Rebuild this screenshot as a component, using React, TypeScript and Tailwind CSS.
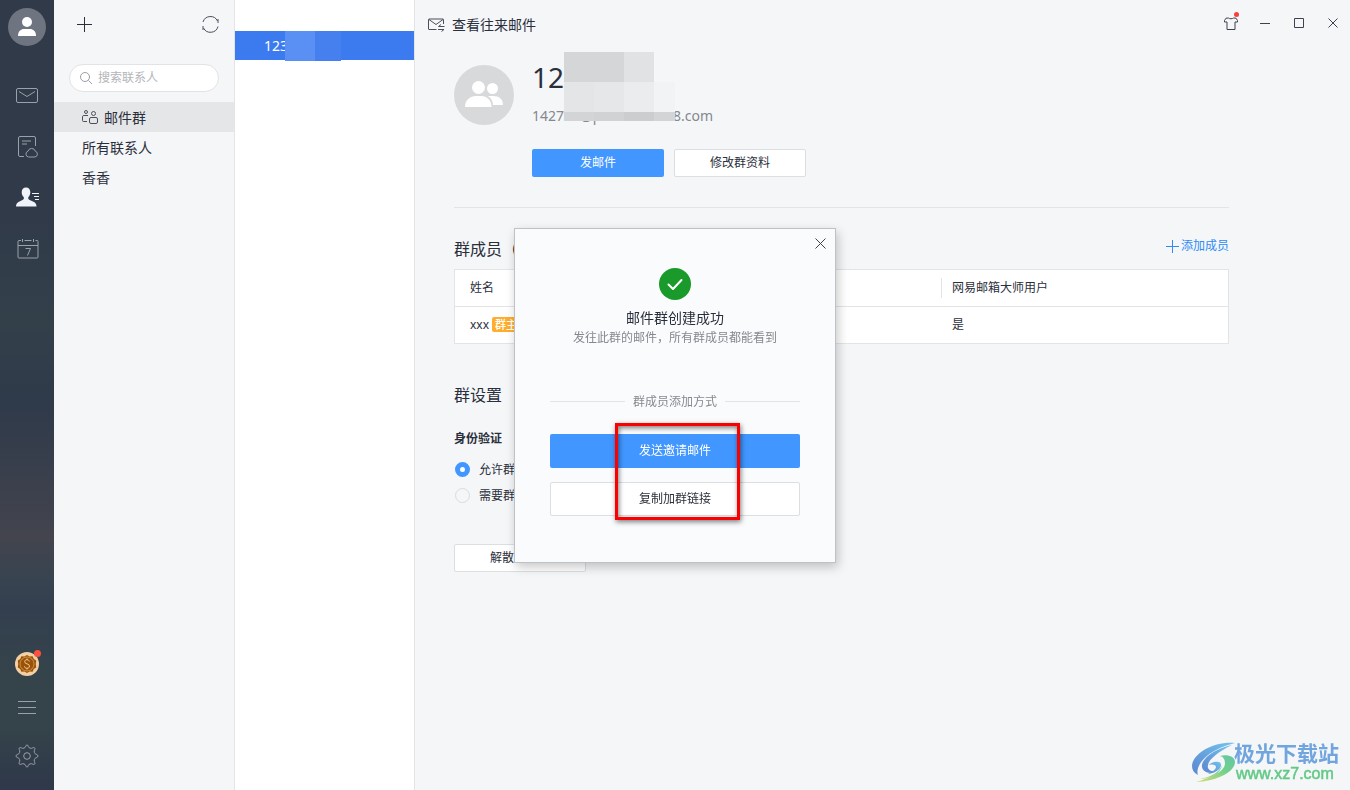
import { useState } from "react";
import { clsx } from "clsx";

const folders = ["所有联系人", "香香"];

function MailIcon() {
  return (
    <svg width="22" height="16" viewBox="0 0 22 16" fill="none" stroke="currentColor">
      <rect x="0.5" y="0.5" width="21" height="14" rx="1.5" />
      <path d="M3 3.5l8 5 8-5" />
    </svg>
  );
}

function NoteIcon() {
  return (
    <svg width="20" height="22" viewBox="0 0 20 22" fill="none" stroke="currentColor">
      <path d="M6 20.500H2A1.500 1.500 0 0 1 .500 19V2A1.500 1.500 0 0 1 2 .500H16A1.500 1.500 0 0 1 17.500 2V10M4 5h9M4 8h5" />
      <path d="M10.500 21a3 3 0 0 1-.5-5.800a3.800 3.800 0 0 1 7.300 0a3 3 0 0 1-.3 5.800z" />
    </svg>
  );
}

function ContactIcon() {
  return (
    <svg width="24" height="20" viewBox="0 0 24 20" fill="#f0f4fa" className="mb-0.5">
      <path d="M10 0.500c2.600 0 4.300 1.900 4.300 4.700 0 2-.8 3.800-1.900 4.900-.5 1.700.1 2.500 1.300 3l4.300 1.800c1.500.7 2.500 2.200 2.500 4.600H0c0-2.400 1-3.900 2.500-4.600L6.500 13.100c1.200-.5 1.700-1.300 1.200-3C6.500 9 5.700 7.200 5.700 5.200 5.700 2.400 7.400.500 10 .500z" />
      <path d="M16 6.500h7M18 9.500h5M19 12.500h4" stroke="#f0f4fa" />
    </svg>
  );
}

function CalendarIcon() {
  return (
    <svg width="22" height="20" viewBox="0 0 22 20" fill="none" stroke="currentColor">
      <path d="M4 1.500H2A1 1 0 0 0 1 2.500V18A1 1 0 0 0 2 19H20A1 1 0 0 0 21 18V2.500A1 1 0 0 0 20 1.500H18.500M7.500 1.500H14.500M1 6.500H21M5.500 0V3M16.500 0V3" />
      <path d="M8.500 9.500h5l-3 7" />
    </svg>
  );
}

function CoinIcon() {
  return (
    <svg width="24" height="24" viewBox="0 0 24 24" fill="none">
      <circle cx="12" cy="12" r="12" fill="#f3cfa4" />
      <path d="M12 3l2.600 1.500 3-.2 1.200 2.700 2.400 1.600-.4 3.400.4 3.400-2.400 1.600-1.200 2.700-3-.2L12 21l-2.600-1.500-3 .2-1.200-2.700-2.400-1.600.4-3.400-.4-3.400 2.400-1.600 1.200-2.700 3 .2z" fill="#9a5306" />
      <circle cx="12" cy="12" r="7" stroke="#d99f5c" strokeWidth="0.800" />
      <path d="M14.300 9.500c-.3-1.200-1.100-1.800-2.300-1.800s-2.300.7-2.300 2c0 2.900 4.800 1.500 4.800 4.400 0 1.400-1 2.200-2.500 2.200-1.400 0-2.300-.7-2.600-2M12 6.500v1.500M12 16v1.500" stroke="#f0c898" />
    </svg>
  );
}

function GearIcon() {
  return (
    <svg width="24" height="24" viewBox="0 0 24 24" fill="none" stroke="currentColor" strokeLinejoin="round">
      <path d="M10.200 3.400C10.800 2.800 10.700 1 12 1s1.200 1.800 1.800 2.400c.6.600 1.800 1 2.700.9.900-.1 2.200-1.300 3.100-.4s-.3 2.200-.4 3.100c-.1.900.3 2.100.9 2.700.6.600 2.900.8 2.900 2.300s-2.300 1.700-2.900 2.300c-.6.600-1 1.800-.9 2.700.1.900 1.300 2.200.4 3.100s-2.200-.3-3.100-.4c-.9-.1-2.100.3-2.700.9-.6.600-.5 2.400-1.800 2.400s-1.200-1.800-1.800-2.400c-.6-.6-1.800-1-2.700-.9-.9.100-2.200 1.300-3.100.4s.3-2.200.4-3.100c.1-.9-.3-2.100-.9-2.700C3.300 13.700 1 13.500 1 12s2.300-1.700 2.900-2.300c.6-.6 1-1.800.9-2.700-.1-.9-1.300-2.200-.4-3.100s2.200.3 3.100.4c.9.100 2.100-.3 2.700-.9z" />
      <circle cx="12" cy="12" r="3.300" />
    </svg>
  );
}

function SideBar() {
  return (
    <aside className="flex w-[54px] shrink-0 flex-col items-center bg-[linear-gradient(180deg,#303a49_0%,#303a49_27%,#33404a_41%,#2f3a4a_51%,#43444e_68%,#384450_73%,#333f4f_77%,#35444a_87%,#35434a_92%,#2f394a_99%)] pt-2 pb-2 text-[#9aa1aa]">
      <button aria-label="账号" className="size-[38px] rounded-full bg-[#6e7480]">
        <svg width="38" height="38" viewBox="0 0 38 38" fill="#fff">
          <circle cx="19" cy="14" r="5" />
          <path d="M10 28c0-5 3-7 6-7h6c3 0 6 2 6 7z" />
        </svg>
      </button>
      <nav className="mt-6 flex flex-col">
        <button aria-label="邮件" className="flex h-[51px] w-[54px] items-center justify-center"><MailIcon /></button>
        <button aria-label="便签" className="flex h-[51px] w-[54px] items-center justify-center pl-0.5"><NoteIcon /></button>
        <button aria-label="联系人" className="flex h-[51px] w-[54px] items-center justify-center pl-0.5"><ContactIcon /></button>
        <button aria-label="日历" className="flex h-[51px] w-[54px] items-center justify-center pl-0.5"><CalendarIcon /></button>
      </nav>
      <div className="mt-auto flex flex-col">
        <button aria-label="金币" className="flex h-11 w-[54px] items-center justify-center">
          <span className="relative">
            <CoinIcon />
            <span className="absolute -top-0.5 -right-0.5 size-[7px] rounded-full bg-[#ff4f3e]" />
          </span>
        </button>
        <button aria-label="菜单" className="flex h-11 w-[54px] items-center justify-center">
          <svg width="18" height="14" viewBox="0 0 18 14" stroke="currentColor">
            <path d="M0 0.500h18M0 6.500h18M0 12.500h18" />
          </svg>
        </button>
        <button aria-label="设置" className="flex h-[52px] w-[54px] items-center justify-center"><GearIcon /></button>
      </div>
    </aside>
  );
}

function ContactFolders() {
  return (
    <section className="w-[181px] shrink-0 border-r border-[#e2e4e6] bg-[#f4f6f8]">
      <div className="flex h-[49px] items-center justify-between pr-[15px] pl-[23px] text-[#2b2f3b]">
        <button aria-label="新建">
          <svg width="15" height="15" viewBox="0 0 15 15" stroke="currentColor">
            <path d="M0 7.500h15M7.500 0v15" />
          </svg>
        </button>
        <button aria-label="刷新">
          <svg width="17" height="17" viewBox="0 0 17 17" fill="none" stroke="#4a4f59">
            <path d="M1 6A7.800 7.800 0 0 1 15.500 5M16 3v4M16 10.500A7.800 7.800 0 0 1 1.500 12M1 10v4" />
          </svg>
        </button>
      </div>
      <label className="mt-[15px] mr-[15px] ml-[15px] flex h-7 items-center gap-1.5 rounded-full border border-[#e1e3e6] bg-white pl-2.5">
        <svg width="12" height="12" viewBox="0 0 12 12" fill="none" stroke="#9a9ea6" className="shrink-0">
          <circle cx="5" cy="5" r="4.500" />
          <path d="M8.500 8.500L12 12" />
        </svg>
        <input placeholder="搜索联系人" aria-label="搜索联系人" className="w-full min-w-0 bg-transparent text-xs outline-none placeholder:text-[#b3b5b9]" />
      </label>
      <ul className="mt-2.5 text-sm leading-8">
        <li className="flex h-[30px] gap-1.5 bg-[#e5e6e8] pl-7">
          <svg width="16" height="14" viewBox="0 0 16 14" fill="none" stroke="#4a4f59" className="self-center">
            <circle cx="4" cy="2" r="1.500" />
            <circle cx="11.500" cy="3.500" r="2" />
            <path d="M6 5.500H1.800C1 5.500.5 6 .5 6.800V10.500C.5 11.300 1 11.500 1.800 11.500H5" />
            <rect x="7.500" y="7.500" width="8" height="6" rx="1.500" />
          </svg>
          邮件群
        </li>
        {folders.map((name) => (
          <li key={name} className="h-[30px] pl-7">{name}</li>
        ))}
      </ul>
    </section>
  );
}

function GroupList() {
  return (
    <section className="w-[180px] shrink-0 border-r border-[#e2e4e6] bg-white pt-[31px]">
      <div className="relative h-[29px] bg-[#3c7af0] pl-[29px] text-sm leading-[29px] text-white">
        1234
        <span className="absolute top-0 left-[50px] flex h-[30px]">
          <i className="w-[30px] bg-[#5a90f3]" />
          <i className="w-[26px] bg-[#4680ee]" />
        </span>
      </div>
    </section>
  );
}

function WindowBar() {
  return (
    <header className="flex h-[50px] items-center justify-between pr-3 pl-[13px]">
      <div className="flex items-center gap-[7px] text-sm">
        <svg width="17" height="14" viewBox="0 0 17 14" fill="none" stroke="#4a4f59">
          <path d="M8.500 11.500H1A.5.500 0 0 1 .5 11V1.500A.5.500 0 0 1 1 1H15A.5.500 0 0 1 15.500 1.500V6M1 1.500l7 5 7-5" />
          <path d="M16.500 8.500H10.500L13 6.500M10 11.500h6l-2.500 2" />
        </svg>
        查看往来邮件
      </div>
      <div className="flex items-center gap-6 pb-1 text-[#3d424c]">
        <button aria-label="换肤" className="relative -mr-0.5">
          <svg width="14" height="13" viewBox="0 0 14 13" fill="none" stroke="currentColor">
            <path d="M4.500 1C5.500 2 8.500 2 9.500 1L12 1.200 13.500 3.500V5H11V12.500H3V5H.5V3.500L2 1.200z" />
          </svg>
          <span className="absolute -top-[5px] -right-px size-[5px] rounded-full bg-[#fa3e3e]" />
        </button>
        <button aria-label="最小化">
          <svg width="10" height="11" viewBox="0 0 10 11" stroke="currentColor"><path d="M0 5.500h10" /></svg>
        </button>
        <button aria-label="最大化">
          <svg width="10" height="10" viewBox="0 0 10 10" fill="none" stroke="currentColor"><path d="M.5.500h9v9h-9z" /></svg>
        </button>
        <button aria-label="关闭">
          <svg width="10" height="10" viewBox="0 0 10 10" stroke="currentColor"><path d="M.5.500l9 9M9.500.500l-9 9" /></svg>
        </button>
      </div>
    </header>
  );
}

function GroupProfile() {
  return (
    <div className="flex gap-[18px] border-b border-[#e2e4e6] pt-[15px] pb-[30px]">
      <svg width="60" height="60" viewBox="0 0 60 60" fill="#fff" className="shrink-0">
        <circle cx="30" cy="30" r="30" fill="#d8d9db" />
        <circle cx="38.500" cy="23.500" r="5.500" />
        <path d="M34 31h5c6 0 10 3 10 9H39c0-4-2-7-5-9z" />
        <circle cx="24.500" cy="22.500" r="6.500" />
        <path d="M11 42c0-7 5-11 11-11h5c6 0 10.500 4 10.500 11z" />
      </svg>
      <div>
        <div className="relative">
          <h1 className="text-[28px] leading-6">1234</h1>
          <p className="mt-[18px] flex text-sm leading-[18px] text-[#85888e]">
            <span className="w-[141px]">142763@p</span>
            <span>8.com</span>
          </p>
          <div className="absolute -top-[13px] left-8 flex h-[69px] w-[111px] flex-col">
            <div className="flex h-[30px]">
              <i className="w-[60px] bg-[#d5d6d8]" />
              <i className="w-[30px] bg-[#e1e2e4]" />
            </div>
            <div className="flex h-[30px]">
              <i className="w-[30px] bg-[#e4e5e7]" />
              <i className="w-[30px] bg-[#e6e7e9]" />
              <i className="w-[30px] bg-[#ebecee]" />
              <i className="w-[21px] bg-[#f2f3f5]" />
            </div>
            <div className="flex h-[9px]">
              <i className="w-[30px] bg-[#d3d4d6]" />
              <i className="w-[30px] bg-[#d1d2d4]" />
              <i className="w-[30px] bg-[#cccdcf]" />
              <i className="w-[21px] bg-[#d3d4d6]" />
            </div>
          </div>
        </div>
        <div className="mt-6 flex gap-2.5 text-xs">
          <button className="h-7 w-[132px] rounded-xs bg-[#4196ff] text-white">发邮件</button>
          <button className="h-7 w-[132px] rounded-xs border border-[#dcdfe1] bg-white">修改群资料</button>
        </div>
      </div>
    </div>
  );
}

function Members() {
  return (
    <section className="mt-7">
      <div className="flex justify-between">
        <h2 className="text-base leading-[26px]">群成员（1）</h2>
        <a href="#add" className="flex h-5 items-center gap-0.5 text-xs leading-5 text-[#2e8bf5]">
          <svg width="13" height="13" viewBox="0 0 13 13" stroke="currentColor"><path d="M0 6.500h13M6.500 0v13" /></svg>
          添加成员
        </a>
      </div>
      <div className="mt-[7px] border border-[#e2e4e6] bg-white">
        <table className="w-full table-fixed text-left text-xs">
          <thead>
            <tr className="h-9 border-b border-[#e2e4e6]">
              <th className="pl-[15px] font-normal">姓名</th>
              <th className="w-[287px] font-normal">
                <span className="block border-l border-[#e2e4e6] pl-2.5 leading-5">网易邮箱大师用户</span>
              </th>
            </tr>
          </thead>
          <tbody>
            <tr className="h-[37px]">
              <td className="pl-[15px]">
                <span className="flex items-center gap-[3px]">
                  xxx
                  <span className="rounded-xs bg-[#ffad2b] px-[3px] text-[11px] leading-[15px] font-medium text-white">群主</span>
                </span>
              </td>
              <td className="pl-[11px]">是</td>
            </tr>
          </tbody>
        </table>
      </div>
    </section>
  );
}

const joinModes = ["允许群成员直接加入", "需要群主验证后加入"];

function Settings() {
  const [mode, setMode] = useState(0);

  return (
    <section className="mt-[39px] text-xs">
      <h2 className="text-base leading-6">群设置</h2>
      <fieldset className="mt-[22px]">
        <legend className="leading-5 font-bold">身份验证</legend>
        <div className="mt-[7px]">
          {joinModes.map((label, i) => (
            <label key={label} className="flex h-[26px] items-center gap-[9px] pl-px">
              <input
                type="radio"
                name="join"
                checked={mode === i}
                onChange={() => setMode(i)}
                className={clsx(
                  "size-[15px] shrink-0 appearance-none rounded-full",
                  mode === i ? "border-5 border-[#4196ff] bg-white" : "border border-[#d9dcde]"
                )}
              />
              <span className="pt-0.5">{label}</span>
            </label>
          ))}
        </div>
      </fieldset>
      <button className="mt-9 h-7 w-[132px] rounded-xs border border-[#dcdfe1] bg-white">解散邮件群</button>
    </section>
  );
}

function CreatedDialog() {
  return (
    <div className="fixed inset-0 flex items-center justify-center">
      <div role="dialog" aria-label="邮件群创建成功" className="relative flex w-[322px] flex-col items-center border border-[#bfc2c5] bg-[#fafbfd] px-[35px] pt-[39px] pb-[46px] text-xs shadow-[2px_4px_10px_rgba(0,0,0,0.22)]">
        <button aria-label="关闭" className="absolute top-[9px] right-[9px] text-[#3d424c]">
          <svg width="11" height="11" viewBox="0 0 11 11" stroke="currentColor"><path d="M.5.500l10 10M10.500.500l-10 10" /></svg>
        </button>
        <svg width="32" height="32" viewBox="0 0 32 32" fill="none">
          <circle cx="16" cy="16" r="16" fill="#1a9a2a" />
          <path d="M9.500 16.500l4.500 4.500 8.500-9" stroke="#fff" strokeWidth="2" strokeLinecap="round" strokeLinejoin="round" />
        </svg>
        <h2 className="mt-2 text-sm leading-5">邮件群创建成功</h2>
        <p className="leading-5 whitespace-nowrap text-[#85888e]">发往此群的邮件，所有群成员都能看到</p>
        <div className="mt-11 flex w-full items-center gap-2 leading-5 text-[#85888e]">
          <hr className="flex-1 border-[#e2e4e6]" />
          群成员添加方式
          <hr className="flex-1 border-[#e2e4e6]" />
        </div>
        <div className="relative mt-[22px] flex w-full flex-col gap-3.5">
          <button className="h-[34px] rounded-xs bg-[#4196ff] text-white">发送邀请邮件</button>
          <button className="h-[34px] rounded-xs border border-[#dcdfe1] bg-white">复制加群链接</button>
          <div className="pointer-events-none absolute -top-[11px] left-[65px] h-[97px] w-[125px] border-3 border-[#fb0000] shadow-[1px_2px_5px_rgba(0,0,0,0.5),inset_1px_2px_5px_rgba(0,0,0,0.5)]" />
        </div>
      </div>
    </div>
  );
}

function SiteMark() {
  return (
    <div className="fixed right-[11px] bottom-[7px] flex items-center">
      <svg width="44" height="42" viewBox="0 0 44 42" fill="none">
        <defs>
          <linearGradient id="sky" x1="0" y1="1" x2="1" y2="0">
            <stop offset="0" stopColor="#5b86d0" />
            <stop offset="1" stopColor="#74c4ee" />
          </linearGradient>
          <linearGradient id="leaf" x1="0" y1="1" x2="1" y2="0">
            <stop offset="0" stopColor="#d6dc72" />
            <stop offset="0.600" stopColor="#6fd08c" />
            <stop offset="1" stopColor="#66c6a8" />
          </linearGradient>
        </defs>
        <path d="M43 2C24 0 1 11 0 25c0 4 2 7 6 9C3 25 14 9 43 2z" fill="url(#sky)" />
        <path d="M40 4C22 8 9 18 10 26c1 5 7 7 13 5-5-1-8-3-7-7 1-6 10-13 24-20z" fill="url(#sky)" />
        <path d="M17 24c2-3 11-5 12-1 1 5-6 9-13 10 3-2 8-4 8-7 0-2-3-3-7-2z" fill="url(#sky)" />
        <path d="M28 15c8-2 15 1 15 6C43 30 27 40 4 41c14-4 28-10 29-18 0-4-1-7-5-8z" fill="url(#leaf)" />
        <path d="M30 24c-2 7-11 12-22 14 11 0 21-6 22-14z" fill="url(#leaf)" />
      </svg>
      <div className="-ml-0.5">
        <p className="text-[21px] leading-6 font-bold text-[#71a5de]">极光下载站</p>
        <p className="pl-0.5 font-['Liberation_Sans',sans-serif] text-base leading-[18px] text-[#62c985] [-webkit-text-stroke:0.5px]">www.xz7.com</p>
      </div>
    </div>
  );
}

export default function App() {
  return (
    <div className="flex min-h-screen font-['Noto_Sans','Noto_Sans_CJK_SC',sans-serif] text-[#2b2f3b]">
      <SideBar />
      <ContactFolders />
      <GroupList />
      <main className="min-w-0 flex-1 bg-[#f4f6f8]">
        <WindowBar />
        <div className="pr-[121px] pl-[39px]">
          <GroupProfile />
          <Members />
          <Settings />
        </div>
      </main>
      <CreatedDialog />
      <SiteMark />
    </div>
  );
}
